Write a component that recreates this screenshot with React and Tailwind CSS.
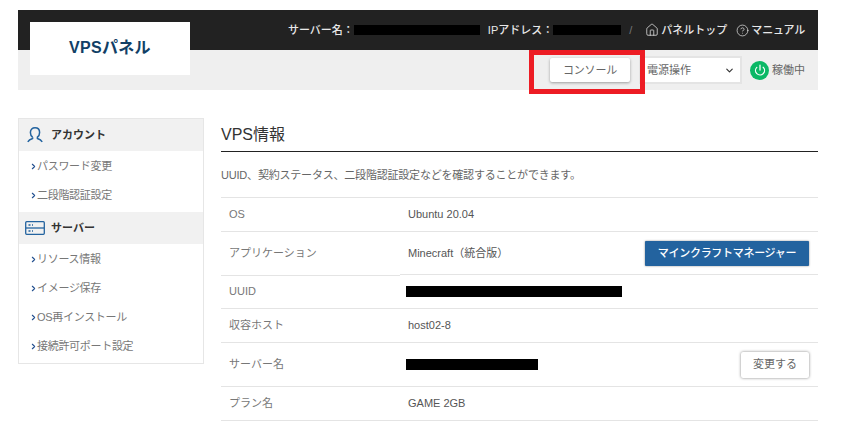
import { ChevronRight, ChevronDown, House, CircleHelp, Power } from 'lucide-react'

const font = "font-['Liberation_Sans','Noto_Sans_CJK_JP',sans-serif]"

function UserIcon() {
  return (
    <svg width="16" height="17" viewBox="0 0 16 17" fill="none" stroke="#23639f" strokeWidth="1.5">
      <path d="M5.6 10.2C3.9 8.9 3.4 7.2 3.4 5.4 3.4 2.6 5.4 0.8 8 0.8s4.6 1.8 4.6 4.6c0 1.8-.5 3.5-2.2 4.8v1.3c1.9.6 3.9 1.7 4.8 3.3" />
      <path d="M5.6 10.2v1.3c-1.9.6-3.9 1.7-4.8 3.3" />
    </svg>
  )
}

function ServerIcon() {
  return (
    <svg width="20" height="14" viewBox="0 0 20 14" fill="none" stroke="#23639f" strokeWidth="1.3">
      <rect x="0.7" y="0.7" width="18.6" height="12.6" rx="1" />
      <path d="M1 7h18" />
      <path d="M3.5 4h2M7 4h1M3.5 10h2M7 10h1" strokeWidth="1.4" />
    </svg>
  )
}

function SideHead({ icon, label, className }) {
  return (
    <div className={`flex items-center bg-[#f1f1f1] text-[11px] font-bold text-[#333] ${className}`}>
      <span className="flex w-[32px] justify-center">{icon}</span>
      <span>{label}</span>
    </div>
  )
}

function SideLink({ label, className }) {
  return (
    <a className={`flex h-[29px] items-center pl-[10px] pt-[2px] text-[11px] tracking-[-0.3px] text-[#777] ${className}`}>
      <ChevronRight size={9} strokeWidth={3} className="mr-[-1px] text-[#23508f]" />
      {label}
    </a>
  )
}

function Row({ label, children, action, leftClass, className }) {
  return (
    <div className={`flex text-[11px] ${className}`}>
      <div className={`flex w-[179px] items-center border-b border-[#e4e4e4] pl-[8px] text-[#777] ${leftClass}`}>{label}</div>
      <div className="flex flex-1 items-center border-b border-[#e4e4e4] pl-[8px] text-[#555]">
        <div className="flex-1">{children}</div>
        {action}
      </div>
    </div>
  )
}

export default function App() {
  return (
    <div className={`h-[431px] w-[865px] overflow-hidden bg-white pt-[10px] ${font}`}>
      <div className="relative ml-[18px] w-[800px]">
        {/* Top bar */}
        <div className="flex h-[40px] items-center justify-end bg-[#222222] pr-[13px] text-[11px] font-medium text-[#e8e8e8]">
          <span>サーバー名：</span>
          <span className="mr-[8px] h-[10px] w-[126px] bg-black"></span>
          <span>IPアドレス：</span>
          <span className="h-[10px] w-[68px] bg-black"></span>
          <span className="ml-[8px] font-normal text-[#777]">/</span>
          <House size={14} strokeWidth={1.3} className="ml-[13px]" />
          <span className="ml-[2px]">パネルトップ</span>
          <CircleHelp size={13} strokeWidth={1.3} className="ml-[9px] mr-[2px]" />
          <span className="tracking-[-0.2px]">マニュアル</span>
        </div>
        {/* Sub bar */}
        <div className="flex h-[40px] items-center justify-end bg-[#efefef] pr-[13px]">
          <button className="h-[24px] w-[80px] rounded-[2px] bg-white text-[11px] tracking-[-0.2px] text-[#666] shadow-[0_1px_3px_rgba(0,0,0,0.35)]">
            コンソール
          </button>
          <div className="ml-[9px] flex h-[28px] w-[103px] items-center justify-between border-2 border-[#e4e4e4] bg-white pl-[6px] pr-[5px] text-[11px] text-[#666]">
            電源操作
            <ChevronDown size={11} strokeWidth={2.5} className="text-[#333]" />
          </div>
          <span className="ml-[8px] flex h-[19px] w-[19px] items-center justify-center rounded-full bg-[#0bb866]">
            <Power size={12} strokeWidth={2.5} className="text-white" />
          </span>
          <span className="ml-[3px] text-[11px] text-[#666]">稼働中</span>
        </div>
        {/* Logo */}
        <div className="absolute left-[12px] top-[12px] flex h-[53px] w-[160px] items-center justify-center bg-white pb-[2px] text-[16px] font-bold tracking-[0.3px] text-[#123f66]">
          VPSパネル
        </div>
        {/* Highlight */}
        <div className="absolute left-[511px] top-[40px] h-[44px] w-[116px] border-[5px] border-[#ed1c24]"></div>

        <div className="mt-[28px] flex items-start">
          {/* Sidebar */}
          <aside className="h-[246px] w-[186px] border border-[#e6e6e6]">
            <SideHead label="アカウント" className="h-[32px]" icon={<UserIcon />} />
            <SideLink label="パスワード変更" />
            <SideLink label="二段階認証設定" className="mb-[3px]" />
            <SideHead label="サーバー" className="h-[32px]" icon={<ServerIcon />} />
            <SideLink label="リソース情報" />
            <SideLink label="イメージ保存" />
            <SideLink label="OS再インストール" />
            <SideLink label="接続許可ポート設定" className="h-[28px]" />
          </aside>

          {/* Main */}
          <main className="ml-[17px] w-[597px]">
            <h1 className="h-[34px] border-b border-[#222] pt-[5px] text-[16px] leading-[24px] text-[#333]">VPS情報</h1>
            <p className="mt-[15px] h-[31px] border-b border-[#e4e4e4] text-[11px] leading-[16px] tracking-[-0.2px] text-[#666]">
              UUID、契約ステータス、二段階認証設定などを確認することができます。
            </p>
            <Row label="OS" className="h-[34px]">Ubuntu 20.04</Row>
            <Row
              label="アプリケーション"
              className="h-[43px]"
              leftClass="mb-[-1px]"
              action={
                <button className="mr-[9px] h-[25px] w-[164px] rounded-[1px] bg-[#23639f] text-[11px] font-medium tracking-[-0.3px] text-white shadow-[0_0_2px_rgba(0,0,0,0.5)]">
                  マインクラフトマネージャー
                </button>
              }
            >
              Minecraft（統合版）
            </Row>
            <Row label="UUID" className="h-[34px]">
              <div className="ml-[-2px] h-[11px] w-[216px] bg-black"></div>
            </Row>
            <Row label="収容ホスト" className="h-[34px]">host02-8</Row>
            <Row
              label="サーバー名"
              className="h-[44px]"
              action={
                <button className="mr-[9px] h-[26px] w-[68px] rounded-[2px] bg-white text-[11px] text-[#666] shadow-[0_0_3px_rgba(0,0,0,0.5)]">
                  変更する
                </button>
              }
            >
              <div className="ml-[-2px] h-[11px] w-[132px] bg-black"></div>
            </Row>
            <Row label="プラン名" className="h-[34px]">GAME 2GB</Row>
          </main>
        </div>
      </div>
    </div>
  )
}
